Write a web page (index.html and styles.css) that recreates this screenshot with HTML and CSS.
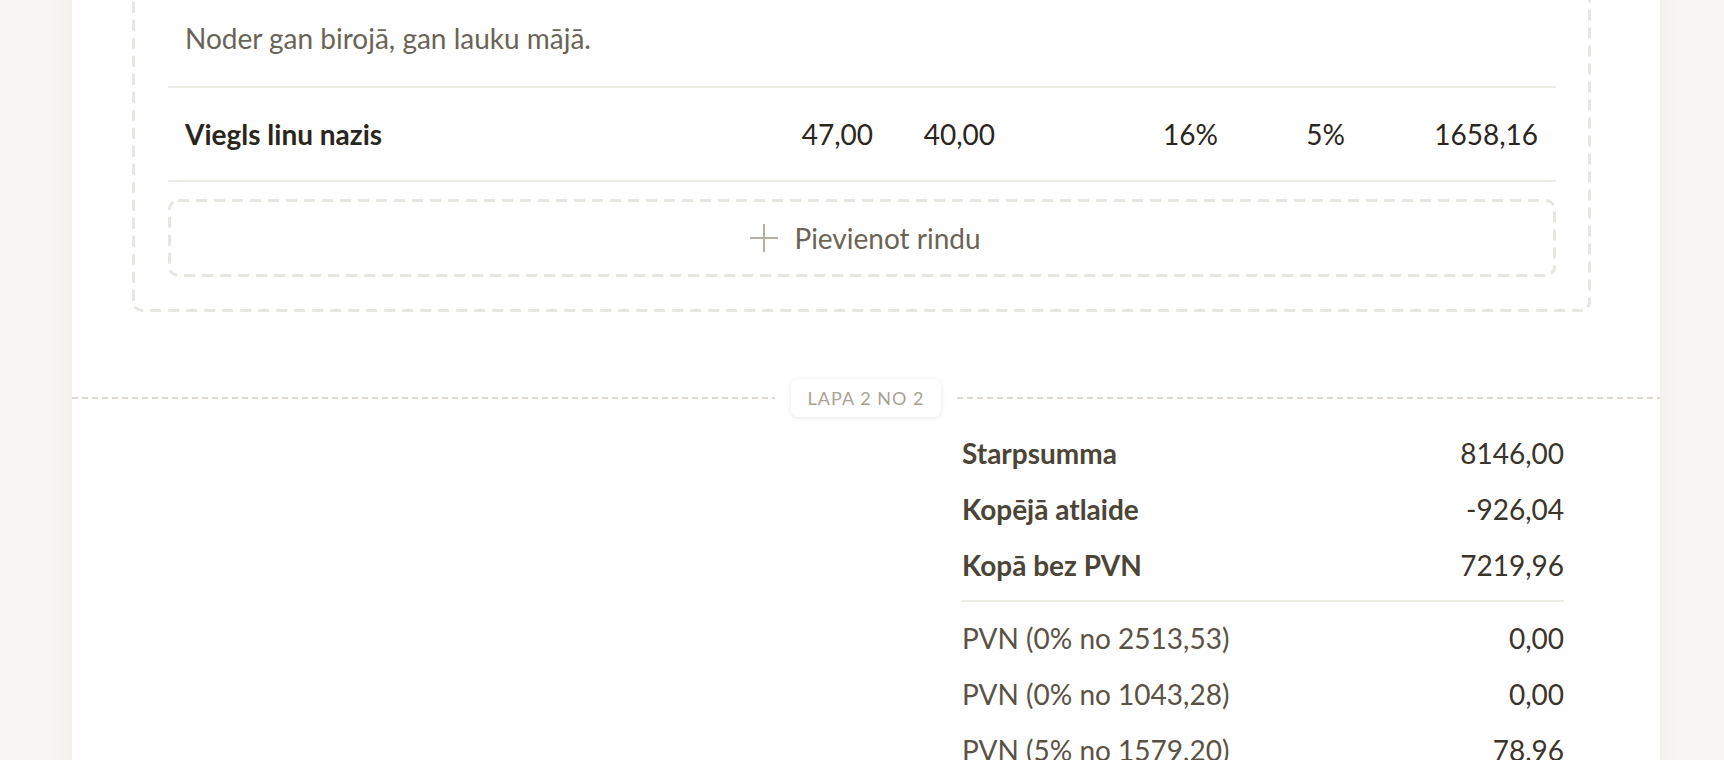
FILE: index.html
```html
<!DOCTYPE html>
<html lang="lv">
  <head>
    <meta charset="UTF-8" />
    <meta name="viewport" content="width=device-width, initial-scale=1.0" />
    <title>Rēķins - lapa 2</title>
    <link rel="stylesheet" href="styles.css">
  </head>
  <body>
    <main class="sheet">
      <!-- preču saraksts -->
      <section class="items-card">
        <p class="item-note">Noder gan birojā, gan lauku mājā.</p>

        <div class="item-row">
          <div class="cell cell-name">Viegls linu nazis</div>
          <div class="cell num">47,00</div>
          <div class="cell num">40,00</div>
          <div class="cell num"></div>
          <div class="cell num">16%</div>
          <div class="cell num">5%</div>
          <div class="cell num">1658,16</div>
        </div>

        <button class="add-row" type="button">
          <svg class="add-icon" width="28" height="28" viewBox="0 0 28 28" aria-hidden="true">
            <path d="M14 0v28M0 14h28" stroke="currentColor" stroke-width="2" fill="none" />
          </svg>
          <span>Pievienot rindu</span>
        </button>
      </section>

      <!-- lapas dalījums -->
      <div class="page-break">
        <span class="dash-line"></span>
        <span class="page-badge">Lapa 2 no 2</span>
        <span class="dash-line"></span>
      </div>

      <!-- kopsummas -->
      <section class="totals">
        <div class="total-row strong"><span>Starpsumma</span><span>8146,00</span></div>
        <div class="total-row strong"><span>Kopējā atlaide</span><span>-926,04</span></div>
        <div class="total-row strong"><span>Kopā bez PVN</span><span>7219,96</span></div>
        <hr class="totals-sep" />
        <div class="total-row"><span>PVN (0% no 2513,53)</span><span>0,00</span></div>
        <div class="total-row"><span>PVN (0% no 1043,28)</span><span>0,00</span></div>
        <div class="total-row"><span>PVN (5% no 1579,20)</span><span>78,96</span></div>
      </section>
    </main>
  </body>
</html>
```

FILE: styles.css
```css
:root {
  --bg: #f7f6f4;
  --paper: #ffffff;
  --text-dark: #2b261d;
  --text-brown: #4c4437;
  --text-muted: #6a6457;
  --line: #ecebe6;
  /* garāka svītra nekā pārlūka dashed */
  --dashed-box: url("data:image/svg+xml,%3Csvg xmlns='http://www.w3.org/2000/svg'%3E%3Crect width='100%25' height='100%25' fill='none' rx='10' ry='10' stroke='%23e8e6e1' stroke-width='6' stroke-dasharray='11 7'/%3E%3C/svg%3E");
}

* {
  margin: 0;
  padding: 0;
  box-sizing: border-box;
}

html,
body {
  height: 100%;
  overflow: hidden;
}

body {
  background: var(--bg);
  font-family: Lato, "Liberation Sans", sans-serif;
  font-size: 28px;
  color: var(--text-dark);
}

/* lapa */
.sheet {
  width: 1588px;
  margin: -40px 0 0 72px;
  min-height: 900px;
  background: var(--paper);
  box-shadow: 0 0 28px rgba(60, 50, 30, 0.05);
  padding: 0 0 0 60px;
}

/* preču kartīte */
.items-card {
  width: 1459px;
  background: var(--dashed-box);
  border-radius: 10px;
  padding: 36px 35px 35px 36px;
}

.item-note {
  padding: 21px 17px 27px;
  line-height: 42px;
  color: var(--text-muted);
}

.item-row {
  display: grid;
  grid-template-columns: 596px 127px 122px 96px 127px 127px 193px;
  align-items: center;
  height: 96px;
  border-top: 2px solid var(--line);
  border-bottom: 2px solid var(--line);
}

.cell {
  padding: 0 18px 0 17px;
  line-height: 34px;
}

.cell-name {
  font-weight: 700;
}

.num {
  text-align: right;
}

.add-row {
  display: flex;
  align-items: center;
  justify-content: center;
  gap: 16px;
  width: 100%;
  height: 78px;
  margin-top: 17px;
  padding-left: 7px;
  background: var(--dashed-box);
  border: 0;
  border-radius: 10px;
  font: inherit;
  color: var(--text-muted);
}

.add-icon {
  color: #b5afa3;
}

/* lapas dalījums */
.page-break {
  display: flex;
  align-items: center;
  gap: 16px;
  height: 38px;
  margin: 67px 0 8px -60px;
}

.dash-line {
  flex: 1;
  height: 2px;
  background: repeating-linear-gradient(to right, #dcd8d0 0 6px, transparent 6px 10px);
}

.page-badge {
  display: flex;
  align-items: center;
  height: 38px;
  padding: 0 17px;
  background: #fff;
  border-radius: 7px;
  box-shadow: 0 1px 5px rgba(40, 30, 10, 0.1);
  font-size: 18px;
  letter-spacing: 1px;
  text-transform: uppercase;
  color: #a9a293;
}

/* kopsummas */
.totals {
  width: 602px;
  margin: 0 96px 0 auto;
}

.total-row {
  display: flex;
  justify-content: space-between;
  align-items: center;
  height: 56px;
  color: #5a5245;
}

.total-row span:last-child {
  color: #3a342a;
}

.total-row.strong span:first-child {
  font-weight: 700;
  color: var(--text-brown);
}

.totals-sep {
  border: 0;
  border-top: 2px solid var(--line);
  margin: 7px 0 8px;
}
```
